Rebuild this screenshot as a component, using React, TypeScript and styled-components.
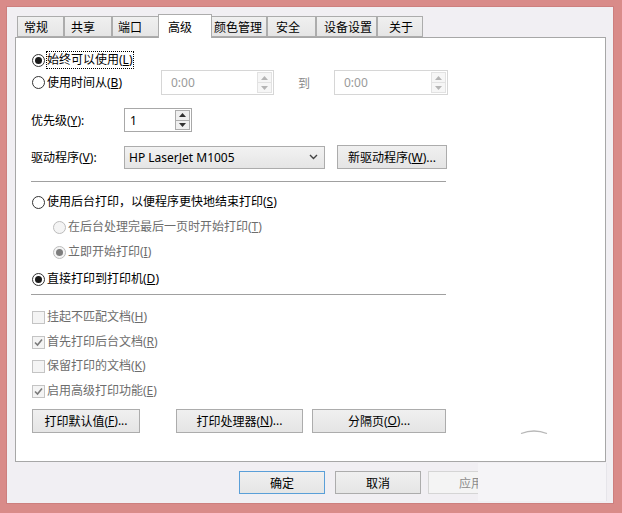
import styled, { createGlobalStyle } from 'styled-components';
import type { ReactNode } from 'react';

const GlobalStyle = createGlobalStyle`
  html, body {
    margin: 0;
    padding: 0;
    background: #d98b89;
  }
  body {
    font-family: "Noto Sans", "Noto Sans CJK SC", sans-serif;
    font-size: 12px;
    color: #000;
  }
`;

const tabs = [
  { label: '常规', w: 47, pad: 6 },
  { label: '共享', w: 48, pad: 6 },
  { label: '端口', w: 48, pad: 5 },
  { label: '高级', w: 54, pad: 9, active: true },
  { label: '颜色管理', w: 57, pad: 3 },
  { label: '安全', w: 49, pad: 8 },
  { label: '设备设置', w: 61, pad: 7 },
  { label: '关于', w: 46, pad: 11 },
];

function Radio({
  checked,
  disabled,
  width,
  focus,
  children,
}: {
  checked?: boolean;
  disabled?: boolean;
  width?: number;
  focus?: boolean;
  children: ReactNode;
}) {
  return (
    <OptionLabel $disabled={disabled} style={width ? { width } : undefined}>
      <RadioMark $disabled={disabled}>{checked && <RadioDot $disabled={disabled} />}</RadioMark>
      <OptionText $focus={focus}>{children}</OptionText>
    </OptionLabel>
  );
}

function Check({ checked, children }: { checked?: boolean; children: ReactNode }) {
  return (
    <OptionLabel $disabled>
      <CheckMark>
        {checked && (
          <svg width="9" height="9" viewBox="0 0 9 9">
            <polyline points="1,4.5 3.5,7 8,1.5" fill="none" stroke="#7a7a7a" strokeWidth="1.6" />
          </svg>
        )}
      </CheckMark>
      <OptionText>{children}</OptionText>
    </OptionLabel>
  );
}

function Arrow({ up, color }: { up?: boolean; color: string }) {
  return (
    <svg width="7" height="4" viewBox="0 0 7 4">
      <polygon points={up ? '0,4 3.5,0 7,4' : '0,0 3.5,4 7,0'} fill={color} />
    </svg>
  );
}

function Spin({ value, disabled, w, h }: { value: string; disabled?: boolean; w: number; h: number }) {
  const c = disabled ? '#b5b5b5' : '#303030';
  return (
    <SpinBox $disabled={disabled} style={{ width: w, height: h }}>
      <SpinValue $disabled={disabled}>{value}</SpinValue>
      <SpinButtons>
        <SpinButton $disabled={disabled}>
          <Arrow up color={c} />
        </SpinButton>
        <SpinButton $disabled={disabled}>
          <Arrow color={c} />
        </SpinButton>
      </SpinButtons>
    </SpinBox>
  );
}

export default function App() {
  return (
    <>
      <GlobalStyle />
      <Frame>
        <Dialog>
          <TabBar>
            {tabs.map((t) => (
              <Tab key={t.label} $active={t.active} $w={t.w} $pad={t.pad}>
                {t.label}
              </Tab>
            ))}
          </TabBar>
          <Panel>
            <Row $mt={12} $h={20}>
              <Radio checked focus>
                始终可以使用(<u>L</u>)
              </Radio>
            </Row>
            <Row $mt={0} $h={25}>
              <Radio width={130}>
                使用时间从(<u>B</u>)
              </Radio>
              <Spin value="0:00" disabled w={113} h={25} />
              <ToText>到</ToText>
              <Spin value="0:00" disabled w={114} h={25} />
            </Row>
            <Row $mt={13} $h={24}>
              <FieldLabel>
                优先级(<u>Y</u>):
              </FieldLabel>
              <Spin value="1" w={68} h={24} />
            </Row>
            <Row $mt={13} $h={24}>
              <FieldLabel>
                驱动程序(<u>V</u>):
              </FieldLabel>
              <Combo>
                <span>HP LaserJet M1005</span>
                <svg width="9" height="6" viewBox="0 0 9 6">
                  <polyline points="1,1 4.5,4.5 8,1" fill="none" stroke="#444" strokeWidth="1.4" />
                </svg>
              </Combo>
              <Button $w={110} $ml={12}>
                新驱动程序(<u>W</u>)...
              </Button>
            </Row>
            <Separator $mt={12} />
            <Row $mt={10} $h={20}>
              <Radio>
                使用后台打印，以便程序更快地结束打印(<u>S</u>)
              </Radio>
            </Row>
            <Row $mt={5} $h={20} $indent={21}>
              <Radio disabled>
                在后台处理完最后一页时开始打印(<u>T</u>)
              </Radio>
            </Row>
            <Row $mt={5} $h={20} $indent={21}>
              <Radio disabled checked>
                立即开始打印(<u>I</u>)
              </Radio>
            </Row>
            <Row $mt={7} $h={20}>
              <Radio checked>
                直接打印到打印机(<u>D</u>)
              </Radio>
            </Row>
            <Separator $mt={5} />
            <Row $mt={12} $h={20}>
              <Check>
                挂起不匹配文档(<u>H</u>)
              </Check>
            </Row>
            <Row $mt={5} $h={20}>
              <Check checked>
                首先打印后台文档(<u>R</u>)
              </Check>
            </Row>
            <Row $mt={4} $h={20}>
              <Check>
                保留打印的文档(<u>K</u>)
              </Check>
            </Row>
            <Row $mt={5} $h={20}>
              <Check checked>
                启用高级打印功能(<u>E</u>)
              </Check>
            </Row>
            <Row $mt={8} $h={23}>
              <Button $w={108} $ml={1}>
                打印默认值(<u>F</u>)...
              </Button>
              <Button $w={127} $ml={36}>
                打印处理器(<u>N</u>)...
              </Button>
              <Button $w={134} $ml={9}>
                分隔页(<u>O</u>)...
              </Button>
            </Row>
            <Smudge width="28" height="5" viewBox="0 0 28 5">
              <path d="M1 4.5 Q14 -0.5 27 4.5" fill="none" stroke="#b8b8b8" strokeWidth="1.3" />
            </Smudge>
          </Panel>
          <Footer>
            <Button $w={86} $h={23} $default>
              确定
            </Button>
            <Button $w={86} $h={23} $ml={10}>
              取消
            </Button>
            <Button $w={86} $h={23} $ml={7} $disabled>
              应用
            </Button>
          </Footer>
          <Patch />
        </Dialog>
      </Frame>
    </>
  );
}

const Frame = styled.div`
  width: 622px;
  height: 513px;
  box-sizing: border-box;
  background: #d98b89;
  border-left: 7px solid #d98b89;
  border-top: 7px solid #d98b89;
  border-right: 9px solid #d98b89;
  border-bottom: 10px solid #d98b89;
`;

const Dialog = styled.div`
  position: relative;
  height: 100%;
  background: #f1eff3;
  box-shadow: 0 0 0 1px #cd7f7e;
`;

const TabBar = styled.div`
  display: flex;
  align-items: flex-end;
  height: 23px;
  padding: 7px 0 0 10px;
`;

const Tab = styled.div<{ $active?: boolean; $w: number; $pad: number }>`
  box-sizing: border-box;
  width: ${(p) => p.$w}px;
  height: ${(p) => (p.$active ? 24 : 21)}px;
  padding-left: ${(p) => p.$pad}px;
  margin: ${(p) => (p.$active ? '0 -2px -1px -2px' : '0')};
  display: flex;
  align-items: center;
  padding-top: ${(p) => (p.$active ? 0 : 1)}px;
  border: 1px solid #acacac;
  border-bottom: ${(p) => (p.$active ? 'none' : '1px solid #acacac')};
  background: ${(p) => (p.$active ? '#fff' : 'linear-gradient(#f0f0f0, #e5e5e5)')};
  position: relative;
  z-index: ${(p) => (p.$active ? 2 : 1)};
  white-space: nowrap;
`;

const Panel = styled.div`
  position: relative;
  box-sizing: border-box;
  width: 591px;
  height: 425px;
  margin-left: 8px;
  background: #fff;
  border: 1px solid #a7a7a7;
  padding-left: 15px;
  display: flex;
  flex-direction: column;
`;

const Row = styled.div<{ $mt: number; $h: number; $indent?: number }>`
  display: flex;
  align-items: center;
  flex: none;
  height: ${(p) => p.$h}px;
  margin-top: ${(p) => p.$mt}px;
  padding-left: ${(p) => p.$indent ?? 0}px;
`;

const OptionLabel = styled.div<{ $disabled?: boolean }>`
  display: flex;
  align-items: center;
  flex: none;
  color: ${(p) => (p.$disabled ? '#6d6d6d' : '#000')};
  white-space: nowrap;
`;

const OptionText = styled.span<{ $focus?: boolean }>`
  margin-left: 2px;
  padding: 1px 0;
  line-height: 14px;
  outline: ${(p) => (p.$focus ? '1px dotted #000' : 'none')};
  outline-offset: 0;
`;

const RadioMark = styled.span<{ $disabled?: boolean }>`
  box-sizing: border-box;
  width: 13px;
  height: 13px;
  margin-left: 1px;
  border-radius: 50%;
  border: 1px solid ${(p) => (p.$disabled ? '#bcbcbc' : '#333')};
  background: ${(p) => (p.$disabled ? '#f4f4f4' : '#fff')};
  display: flex;
  align-items: center;
  justify-content: center;
`;

const RadioDot = styled.span<{ $disabled?: boolean }>`
  width: 7px;
  height: 7px;
  border-radius: 50%;
  background: ${(p) => (p.$disabled ? '#7d7d7d' : '#1a1a1a')};
`;

const CheckMark = styled.span`
  box-sizing: border-box;
  width: 13px;
  height: 13px;
  margin-left: 1px;
  border: 1px solid #c4c4c4;
  background: #f4f4f4;
  display: flex;
  align-items: center;
  justify-content: center;
`;

const SpinBox = styled.div<{ $disabled?: boolean }>`
  box-sizing: border-box;
  display: flex;
  align-items: stretch;
  flex: none;
  background: #fff;
  border: 1px solid ${(p) => (p.$disabled ? '#d6d6d6' : '#a8a8a8')};
  padding: 1px;
`;

const SpinValue = styled.span<{ $disabled?: boolean }>`
  flex: 1;
  display: flex;
  align-items: center;
  padding-left: ${(p) => (p.$disabled ? 8 : 4)}px;
  color: ${(p) => (p.$disabled ? '#9a9a9a' : '#000')};
`;

const SpinButtons = styled.div`
  width: 15px;
  display: flex;
  flex-direction: column;
`;

const SpinButton = styled.div<{ $disabled?: boolean }>`
  flex: 1;
  display: flex;
  align-items: center;
  justify-content: center;
  box-sizing: border-box;
  border: 1px solid ${(p) => (p.$disabled ? '#e2e2e2' : '#acacac')};
  background: ${(p) => (p.$disabled ? '#f6f6f6' : '#efefef')};
  & + & {
    margin-top: -1px;
  }
`;

const ToText = styled.span`
  width: 60px;
  text-align: center;
  color: #8a8a8a;
`;

const FieldLabel = styled.span`
  width: 93px;
  flex: none;
  white-space: nowrap;
`;

const Combo = styled.div`
  box-sizing: border-box;
  width: 201px;
  height: 23px;
  display: flex;
  align-items: center;
  justify-content: space-between;
  padding: 0 6px 0 4px;
  border: 1px solid #acacac;
  background: linear-gradient(#f2f2f2, #e5e5e5);
`;

const Button = styled.div<{ $w: number; $h?: number; $ml?: number; $default?: boolean; $disabled?: boolean }>`
  box-sizing: border-box;
  flex: none;
  width: ${(p) => p.$w}px;
  height: ${(p) => p.$h ?? 24}px;
  margin-left: ${(p) => p.$ml ?? 0}px;
  display: flex;
  align-items: center;
  justify-content: center;
  white-space: nowrap;
  color: ${(p) => (p.$disabled ? '#8c8c8c' : '#000')};
  border: 1px solid ${(p) => (p.$default ? '#5a9fd8' : p.$disabled ? '#d5d5d5' : '#acacac')};
  background: ${(p) => (p.$disabled ? '#f4f4f4' : 'linear-gradient(#f0f0f0, #e5e5e5)')};
`;

const Separator = styled.div<{ $mt: number }>`
  flex: none;
  width: 415px;
  height: 1px;
  margin-top: ${(p) => p.$mt}px;
  background: #a0a0a0;
`;

const Footer = styled.div`
  display: flex;
  align-items: flex-start;
  padding: 9px 0 0 232px;
`;

const Patch = styled.div`
  position: absolute;
  left: 471px;
  top: 456px;
  width: 128px;
  height: 38px;
  background: #f5f4f7;
  border-right: 1px solid #e6e5ea;
`;

const Smudge = styled.svg`
  position: absolute;
  left: 504px;
  top: 391px;
`;
